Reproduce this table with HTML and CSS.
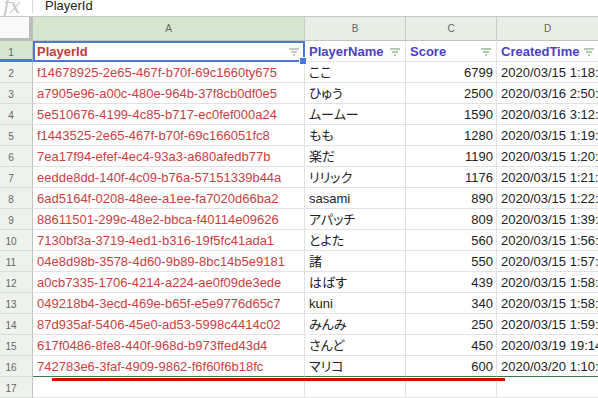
FILE: index.html
```html
<!DOCTYPE html>
<html lang="ja">
<head>
  <meta charset="UTF-8" />
  <title>Players</title>
  <link rel="stylesheet" href="styles.css">
</head>
<body>

  <div class="formula-bar">
    <div class="fx">fx</div>
    <div class="formula-text">PlayerId</div>
  </div>

  <div class="sheet">
    <div class="corner"></div>
    <div class="col-head active">A</div>
    <div class="col-head">B</div>
    <div class="col-head">C</div>
    <div class="col-head">D</div>

    <div class="row-head active">1</div>
    <div class="cell field id-field selected">
      <span>PlayerId</span>
      <svg class="filter" width="10" height="8" viewBox="0 0 10 8"><path d="M0 1h10M2 4h6M4 7h2" /></svg>
      <span class="handle"></span>
    </div>
    <div class="cell field">
      <span>PlayerName</span>
      <svg class="filter" width="10" height="8" viewBox="0 0 10 8"><path d="M0 1h10M2 4h6M4 7h2" /></svg>
    </div>
    <div class="cell field">
      <span>Score</span>
      <svg class="filter" width="10" height="8" viewBox="0 0 10 8"><path d="M0 1h10M2 4h6M4 7h2" /></svg>
    </div>
    <div class="cell field">
      <span>CreatedTime</span>
      <svg class="filter" width="10" height="8" viewBox="0 0 10 8"><path d="M0 1h10M2 4h6M4 7h2" /></svg>
    </div>

    <div class="row-head">2</div>
    <div class="cell id">f14678925-2e65-467f-b70f-69c1660ty675</div>
    <div class="cell name">ここ</div>
    <div class="cell num">6799</div>
    <div class="cell">2020/03/15 1:18:34</div>

    <div class="row-head">3</div>
    <div class="cell id">a7905e96-a00c-480e-964b-37f8cb0df0e5</div>
    <div class="cell name">ひゅう</div>
    <div class="cell num">2500</div>
    <div class="cell">2020/03/16 2:50:11</div>

    <div class="row-head">4</div>
    <div class="cell id">5e510676-4199-4c85-b717-ec0fef000a24</div>
    <div class="cell name">ムームー</div>
    <div class="cell num">1590</div>
    <div class="cell">2020/03/16 3:12:05</div>

    <div class="row-head">5</div>
    <div class="cell id">f1443525-2e65-467f-b70f-69c166051fc8</div>
    <div class="cell name">もも</div>
    <div class="cell num">1280</div>
    <div class="cell">2020/03/15 1:19:40</div>

    <div class="row-head">6</div>
    <div class="cell id">7ea17f94-efef-4ec4-93a3-a680afedb77b</div>
    <div class="cell name">楽だ</div>
    <div class="cell num">1190</div>
    <div class="cell">2020/03/15 1:20:22</div>

    <div class="row-head">7</div>
    <div class="cell id">eedde8dd-140f-4c09-b76a-57151339b44a</div>
    <div class="cell name">リリック</div>
    <div class="cell num">1176</div>
    <div class="cell">2020/03/15 1:21:17</div>

    <div class="row-head">8</div>
    <div class="cell id">6ad5164f-0208-48ee-a1ee-fa7020d66ba2</div>
    <div class="cell name">sasami</div>
    <div class="cell num">890</div>
    <div class="cell">2020/03/15 1:22:48</div>

    <div class="row-head">9</div>
    <div class="cell id">88611501-299c-48e2-bbca-f40114e09626</div>
    <div class="cell name">アパッチ</div>
    <div class="cell num">809</div>
    <div class="cell">2020/03/15 1:39:02</div>

    <div class="row-head">10</div>
    <div class="cell id">7130bf3a-3719-4ed1-b316-19f5fc41ada1</div>
    <div class="cell name">とよた</div>
    <div class="cell num">560</div>
    <div class="cell">2020/03/15 1:56:30</div>

    <div class="row-head">11</div>
    <div class="cell id">04e8d98b-3578-4d60-9b89-8bc14b5e9181</div>
    <div class="cell name">諸</div>
    <div class="cell num">550</div>
    <div class="cell">2020/03/15 1:57:12</div>

    <div class="row-head">12</div>
    <div class="cell id">a0cb7335-1706-4214-a224-ae0f09de3ede</div>
    <div class="cell name">はばす</div>
    <div class="cell num">439</div>
    <div class="cell">2020/03/15 1:58:03</div>

    <div class="row-head">13</div>
    <div class="cell id">049218b4-3ecd-469e-b65f-e5e9776d65c7</div>
    <div class="cell name">kuni</div>
    <div class="cell num">340</div>
    <div class="cell">2020/03/15 1:58:41</div>

    <div class="row-head">14</div>
    <div class="cell id">87d935af-5406-45e0-ad53-5998c4414c02</div>
    <div class="cell name">みんみ</div>
    <div class="cell num">250</div>
    <div class="cell">2020/03/15 1:59:26</div>

    <div class="row-head">15</div>
    <div class="cell id">617f0486-8fe8-440f-968d-b973ffed43d4</div>
    <div class="cell name">さんど</div>
    <div class="cell num">450</div>
    <div class="cell">2020/03/19 19:14:50</div>

    <div class="row-head">16</div>
    <div class="cell id last">742783e6-3faf-4909-9862-f6f60f6b18fc</div>
    <div class="cell name last">マリコ</div>
    <div class="cell num last">600</div>
    <div class="cell last">2020/03/20 1:10:09</div>

    <div class="row-head">17</div>
    <div class="cell"></div>
    <div class="cell"></div>
    <div class="cell"></div>
    <div class="cell"></div>

    <div class="annotation"></div>
  </div>

</body>
</html>
```

FILE: styles.css
```css
body {
  margin: 0;
  width: 598px;
  height: 398px;
  overflow: hidden;
  background: #fff;
  color: #222;
  font-family: "Liberation Sans", Arial, "Noto Sans CJK JP", sans-serif;
  font-size: 13px;
}

/* formula bar */
.formula-bar {
  display: flex;
  align-items: flex-start;
  height: 17px;
  box-sizing: border-box;
  border-bottom: 1px solid #c8c8c8;
  overflow: hidden;
}

.fx {
  width: 33px;
  height: 13px;
  box-sizing: border-box;
  padding-left: 3px;
  border-right: 1px solid #dadada;
  font-family: "DejaVu Serif", serif;
  font-style: italic;
  font-size: 20px;
  line-height: 12px;
  color: #c8c8c8;
  letter-spacing: -1px;
}

.formula-text {
  padding-left: 12px;
  line-height: 13px;
  margin-top: -1px;
}

/* grid */
.sheet {
  position: relative;
  display: grid;
  grid-template-columns: 33px 272px 101px 91px 102px;
  grid-template-rows: 24px;
  grid-auto-rows: 21px;
}

.corner {
  background: #f8f9f8;
  border-right: 4px solid #bcbcbc;
  border-bottom: 3px solid #bcbcbc;
}

.col-head {
  box-sizing: border-box;
  background: #e8eee5;
  border-right: 1px solid #c6ccc4;
  border-bottom: 1px solid #c0c4be;
  text-align: center;
  font-size: 10px;
  line-height: 23px;
  color: #666;
}

.col-head.active {
  background: #d6e5d0;
}

.row-head {
  box-sizing: border-box;
  background: #eef2ec;
  border-right: 1px solid #c0c4be;
  border-bottom: 1px solid #d9ddd7;
  padding: 2px 10px 0 0;
  text-align: center;
  font-size: 10px;
  line-height: 19px;
  color: #666;
}

.row-head.active {
  background: #d6e5d0;
  border-bottom: 3px solid #4a78d6;
}

.cell {
  box-sizing: border-box;
  border-right: 1px solid #e2e2e2;
  border-bottom: 1px solid #e2e2e2;
  padding: 2px 3px 0 4px;
  line-height: 18px;
  white-space: nowrap;
  overflow: hidden;
}

.field {
  display: flex;
  align-items: center;
  justify-content: space-between;
  gap: 4px;
  padding-right: 5px;
  font-weight: bold;
  color: #4a3fc6;
}

.id-field {
  color: #c63a3a;
}

.filter {
  flex: none;
  stroke: #5c9a5e;
  stroke-width: 1.2;
  fill: none;
}

.id-field .filter {
  stroke: #8a9a8a;
}

.selected {
  position: relative;
  overflow: visible;
  outline: 2px solid #4a78d6;
  outline-offset: -2px;
}

.handle {
  position: absolute;
  right: -3px;
  bottom: -4px;
  width: 6px;
  height: 6px;
  background: #4a78d6;
  border: 1px solid #fff;
  z-index: 2;
}

.id {
  color: #c9403f;
}

.name {
  font-feature-settings: "palt";
}

.num {
  text-align: right;
}

.last {
  border-bottom-color: #3f7a48;
}

/* hand drawn underline on the last row */
.annotation {
  position: absolute;
  left: 52px;
  top: 361px;
  width: 453px;
  height: 3px;
  background: #e00000;
}
```
